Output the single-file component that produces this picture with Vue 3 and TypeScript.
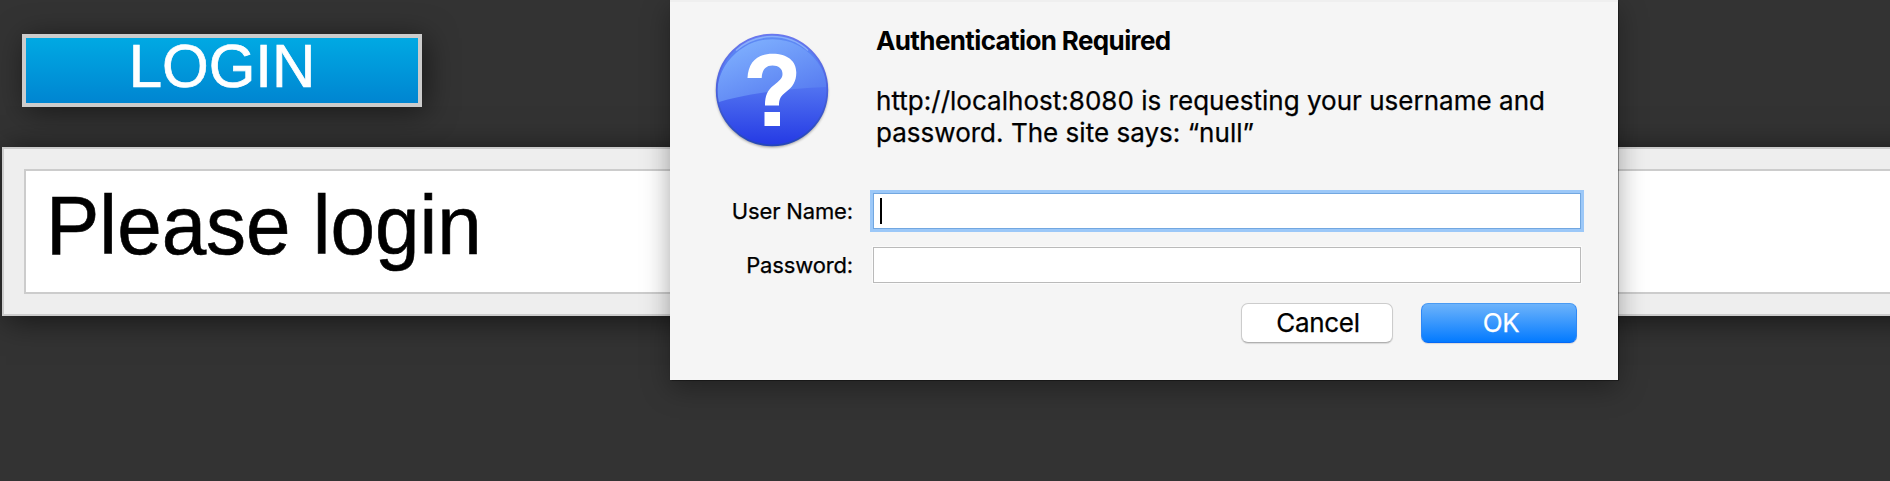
<script setup lang="ts">
import { ref } from 'vue'

interface Field {
  id: string
  label: string
  focused: boolean
}

const message = ref<string[]>([
  'http://localhost:8080 is requesting your username and',
  'password. The site says: “null”',
])

const fields = ref<Field[]>([
  { id: 'username', label: 'User Name:', focused: true },
  { id: 'password', label: 'Password:', focused: false },
])
</script>

<template>
  <div class="page">
    <button class="login" type="button"><span class="login-text">LOGIN</span></button>
    <main class="frame">
      <div class="panel"><span class="panel-text">Please login</span></div>
    </main>

    <section class="dialog" role="dialog" aria-label="Authentication Required">
      <div class="top">
        <svg class="icon" width="124" height="124" viewBox="0 0 124 124" aria-hidden="true">
          <defs>
            <linearGradient id="base" x1="0" y1="0" x2="0" y2="1">
              <stop offset="0" stop-color="#5f8df5" />
              <stop offset="0.5" stop-color="#4f70f0" />
              <stop offset="1" stop-color="#2439e4" />
            </linearGradient>
            <linearGradient id="gloss" x1="0.1" y1="0" x2="0.8" y2="1">
              <stop offset="0" stop-color="#82b4ff" />
              <stop offset="1" stop-color="#5478f0" />
            </linearGradient>
            <linearGradient id="rim" x1="0" y1="0" x2="0" y2="1">
              <stop offset="0" stop-color="#6a78ef" />
              <stop offset="0.5" stop-color="#4a62dd" />
              <stop offset="1" stop-color="#2446b8" />
            </linearGradient>
            <filter id="soft" x="-20%" y="-20%" width="140%" height="140%">
              <feGaussianBlur stdDeviation="1.6" />
            </filter>
          </defs>
          <circle cx="62" cy="63.500" r="55.500" fill="#000" opacity="0.450" filter="url(#soft)" />
          <circle cx="62" cy="62" r="55.500" fill="url(#base)" />
          <path d="M7.500 74.500C35 66 78 60 117.500 59A55.500 55.500 0 1 0 7.500 74.500Z" fill="url(#gloss)" />
          <circle cx="62" cy="62" r="55.300" fill="none" stroke="url(#rim)" stroke-width="1.800" />
          <path d="M26 22.500A53.500 53.500 0 0 1 98 22.500" fill="none" stroke="#a5c5ff" stroke-width="1.500" opacity="0.600" />
          <path
            d="M37.500 50C38.200 34 47.500 25.700 62.500 25.700C77.500 25.700 86.300 33 86.300 44.500C86.300 53.500 82.500 59 76.500 63.500C70.500 68 69 71 69 77.500H55C55 67 57.500 62.500 63.500 57.500C69.500 52.500 72.500 50.500 72.500 46C72.500 40.500 68.500 37.500 62.500 37.500C55.500 37.500 52 42 51.700 50ZM54.500 84H70V98H54.500Z"
            fill="#fff"
          />
        </svg>
        <div class="copy">
          <h1 class="title">Authentication Required</h1>
          <p class="message">
            <span v-for="line in message" :key="line" class="line">{{ line }}</span>
          </p>
        </div>
      </div>
      <div class="fields">
        <div v-for="field in fields" :key="field.id" class="row">
          <span class="label">{{ field.label }}</span>
          <div class="input" :class="{ focused: field.focused }">
            <span v-if="field.focused" class="caret"></span>
          </div>
        </div>
      </div>
      <div class="actions">
        <button class="btn cancel" type="button">Cancel</button>
        <button class="btn ok" type="button">OK</button>
      </div>
    </section>
  </div>
</template>

<style>
html,
body {
  margin: 0;
  overflow: hidden;
  background: #333;
}
</style>

<style scoped>
.page {
  position: relative;
  box-sizing: border-box;
  width: 1890px;
  height: 481px;
  padding: 34px 0 0 2px;
  overflow: hidden;
  background: #333;
}
.login {
  display: block;
  box-sizing: border-box;
  width: 400px;
  height: 73px;
  margin: 0 0 40px 20px;
  padding: 0;
  border: 4px solid #ccc;
  border-radius: 0;
  background: linear-gradient(#00a9e3, #0085d1);
  box-shadow: 4px 4px 30px rgba(0, 0, 0, 0.5);
  color: #fff;
  font: 60px/57px 'Liberation Sans', Arial, sans-serif;
  text-align: center;
}
.login-text {
  display: block;
  height: 65px;
  -webkit-text-stroke: 0.7px #fff;
  transform: scaleY(1.03);
  transform-origin: 0 50px;
}
.frame {
  box-sizing: border-box;
  width: 1920px;
  height: 169px;
  padding: 20px;
  border: 2px solid #ccc;
  background: #eee;
  box-shadow: 4px 4px 30px rgba(0, 0, 0, 0.6);
}
.panel {
  box-sizing: border-box;
  height: 125px;
  padding: 10px 20px;
  border: 2px solid #ccc;
  background: #fff;
}
.panel-text {
  display: block;
  color: #000;
  font: 80px/92px 'Liberation Sans', Arial, sans-serif;
  -webkit-text-stroke: 0.6px #000;
  transform: scaleY(1.035);
  transform-origin: 0 73px;
}
.dialog {
  position: absolute;
  top: 0;
  left: 670px;
  box-sizing: border-box;
  width: 948px;
  height: 380px;
  padding: 26px 37px 37px 40px;
  border-top: 2px solid #efefef;
  background: #f5f5f5;
  box-shadow: 0 0 1px 0.5px rgba(0, 0, 0, 0.35), 0 8px 26px rgba(0, 0, 0, 0.35);
  color: #000;
  font-family: Inter, Roboto, sans-serif;
}
.top {
  display: flex;
  height: 162px;
}
.icon {
  flex: none;
  width: 124px;
  height: 124px;
}
.copy {
  padding-left: 42px;
}
.title {
  margin: 0;
  font-size: 26px;
  font-weight: 700;
  line-height: 26px;
  letter-spacing: -0.62px;
}
.message {
  margin: 31px 0 0;
  font-size: 26px;
  line-height: 32px;
  letter-spacing: 0.02px;
  -webkit-text-stroke: 0.25px #000;
}
.line {
  display: block;
  white-space: nowrap;
}
.fields {
  display: flex;
  flex-direction: column;
  gap: 18px;
  margin-top: 3px;
}
.row {
  display: flex;
  align-items: center;
}
.label {
  width: 143px;
  font-size: 22px;
  line-height: 36px;
  letter-spacing: -0.15px;
  text-align: right;
  white-space: nowrap;
  -webkit-text-stroke: 0.25px #000;
}
.input {
  box-sizing: border-box;
  width: 708px;
  height: 36px;
  margin-left: 20px;
  padding: 4px 6px;
  border: 1px solid #bababa;
  background: #fff;
  box-shadow: 0 0 0 1px #fbfbfb;
}
.input.focused {
  border-color: #72a7e0;
  box-shadow: 0 0 0 3px #9cc8f8;
}
.caret {
  display: block;
  width: 2px;
  height: 26px;
  background: #000;
}
.actions {
  display: flex;
  justify-content: flex-end;
  gap: 28px;
  margin: 20px 4px 0 0;
}
.btn {
  box-sizing: border-box;
  height: 40px;
  padding: 0 0 0 2px;
  border: 1px solid #ccc;
  border-radius: 7px;
  font: 26px/36px Inter, Roboto, sans-serif;
  letter-spacing: -0.3px;
  -webkit-text-stroke: 0.25px currentColor;
}
.cancel {
  width: 152px;
  border-bottom-color: #b0b0b0;
  background: #fff;
  box-shadow: 0 1px 1px rgba(0, 0, 0, 0.12);
  color: #000;
}
.ok {
  width: 156px;
  padding-left: 4px;
  border-color: #4a9bf3 #2f88f5 #0468f5;
  background: linear-gradient(#6db3fb, #037aff);
  box-shadow: 0 1px 1px rgba(0, 0, 0, 0.12);
  color: #fff;
}
</style>
